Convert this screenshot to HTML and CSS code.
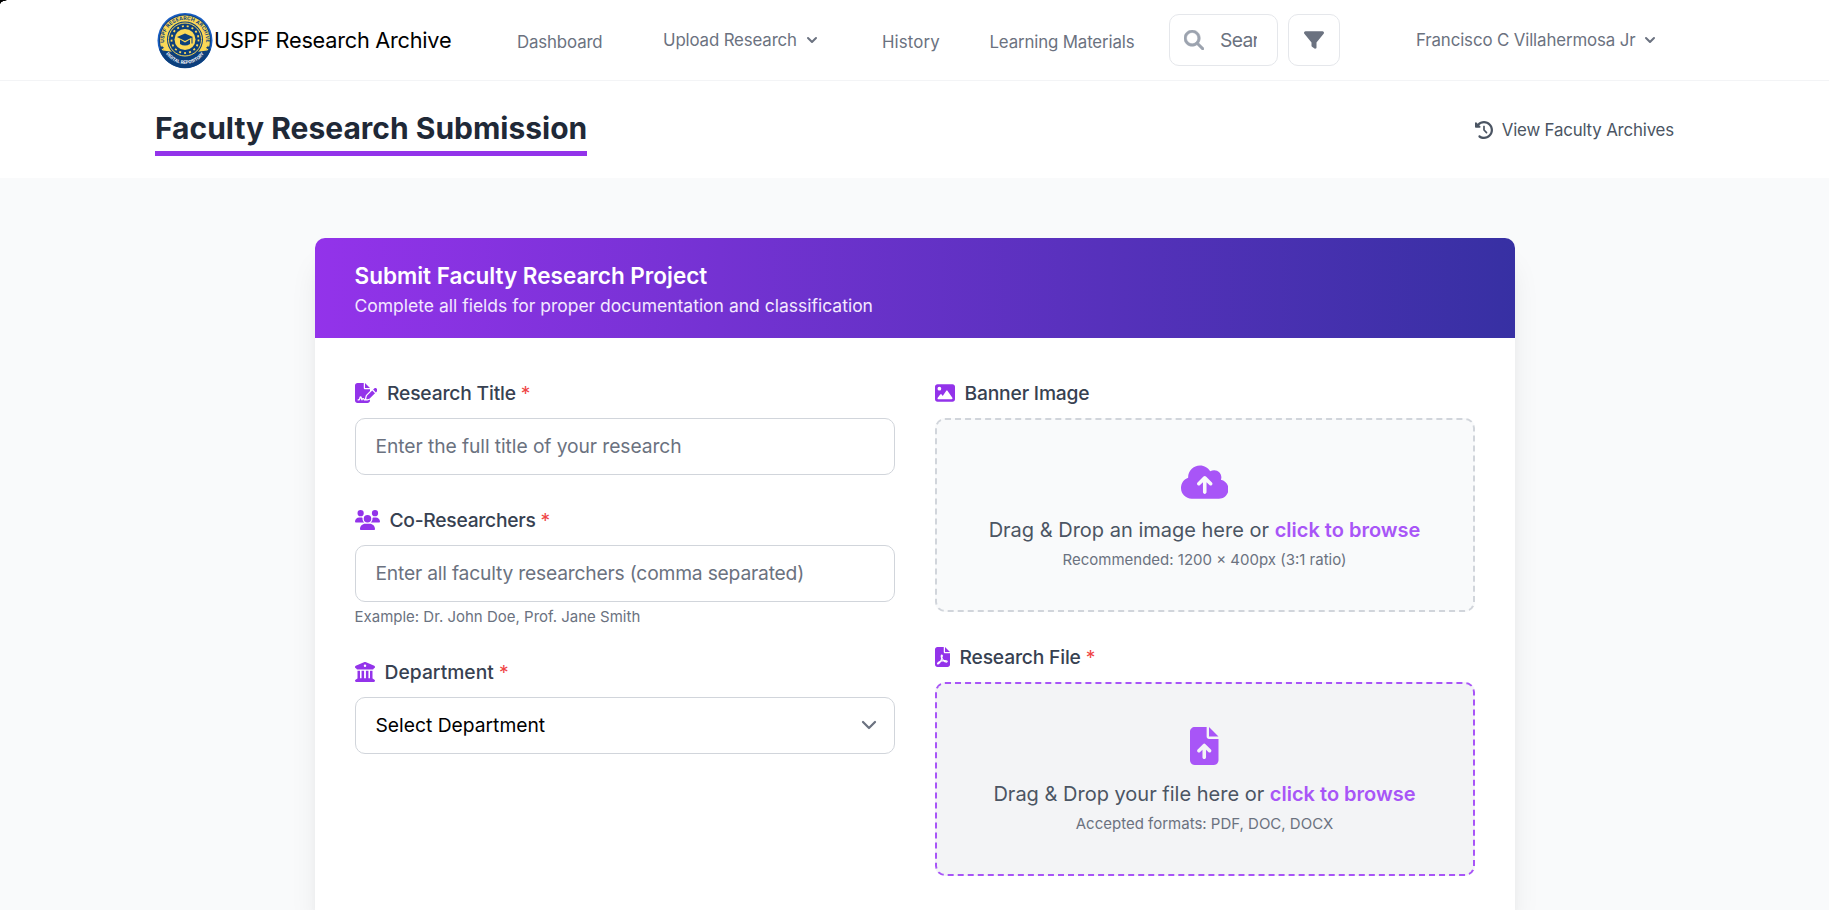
FILE: index.html
```html
<!DOCTYPE html>
<html lang="en">
<head>
<meta charset="utf-8">
<title>Faculty Research Submission</title>
<link rel="stylesheet" href="styles.css">
</head>
<body>
<div class="window-corner"></div>
<nav class="nav">
  <div class="nav-inner">
    <a class="brand">
      <svg class="logo" viewBox="0 0 112 112">
        <defs>
          <path id="arc-top" d="M15 66A42 42 0 1 1 97 66"/>
          <path id="arc-bottom" d="M13 73A46 46 0 0 0 99 73"/>
        </defs>
        <circle cx="56" cy="56" r="55" fill="#1a5fc4"/>
        <circle cx="56" cy="56" r="52" fill="#0c3f7c"/>
        <circle cx="56" cy="56" r="50" fill="#fbd856"/>
        <path d="M4 72Q13 75 16 81Q56 103 96 81Q99 75 108 72A54 54 0 0 1 4 72z" fill="#0c3f7c"/>
        <path d="M12 76Q56 84 100 76L94 92Q56 116 18 92z" fill="#0c3f7c"/>
        <circle cx="56" cy="54" r="36" fill="#0c3f7c"/>
        <circle cx="56" cy="54" r="33" fill="none" stroke="#fbd856" stroke-width="2"/>
        <circle cx="56" cy="54" r="27" fill="none" stroke="#fbd856" stroke-width="3.500" stroke-dasharray="4 6"/>
        <circle cx="56" cy="54" r="21" fill="#fbd856"/>
        <path d="M56 42L72 49 56 57 40 49zM46 54L56 60 66 54V63Q56 69 46 63zM69 50h2v12h-2z" fill="#0c3f7c"/>
        <path d="M10 66l1.500 3h3l-2.500 2 1 3-3-2-3 2 1-3-2.500-2h3zM102 66l1.500 3h3l-2.500 2 1 3-3-2-3 2 1-3-2.500-2h3z" fill="#0c3f7c"/>
        <text class="seal-top"><textPath href="#arc-top" startOffset="50%">USPF RESEARCH ARCHIVE</textPath></text>
        <text class="seal-bottom"><textPath href="#arc-bottom" startOffset="50%">DIGITAL REPOSITORY</textPath></text>
      </svg>
      <span class="brand-name">USPF Research Archive</span>
    </a>
    <a class="nav-link low">Dashboard</a>
    <a class="nav-link">Upload Research<svg class="chev" viewBox="0 0 20 20"><path d="M5.293 7.293a1 1 0 011.414 0L10 10.586l3.293-3.293a1 1 0 111.414 1.414l-4 4a1 1 0 01-1.414 0l-4-4a1 1 0 010-1.414z"/></svg></a>
    <a class="nav-link low history">History</a>
    <a class="nav-link low">Learning Materials</a>
    <div class="search">
      <svg class="search-icon" viewBox="0 0 512 512"><path d="M416 208c0 45.900-14.900 88.300-40 122.700L502.600 457.400c12.500 12.500 12.500 32.800 0 45.300s-32.800 12.500-45.300 0L330.700 376c-34.400 25.200-76.800 40-122.700 40C93.100 416 0 322.900 0 208S93.100 0 208 0S416 93.100 416 208zM208 352a144 144 0 1 0 0-288 144 144 0 1 0 0 288z"/></svg>
      <span class="search-text">Search...</span>
    </div>
    <div class="filter"><svg viewBox="0 0 512 512"><path d="M3.900 54.900C10.500 40.900 24.500 32 40 32H472c15.500 0 29.500 8.900 36.100 22.900s4.600 30.500-5.200 42.500L320 320.900V448c0 12.100-6.800 23.200-17.700 28.600s-23.800 4.300-33.500-3l-64-48c-8.100-6-12.800-15.500-12.800-25.600V320.900L9 97.300C-.7 85.400-2.800 68.800 3.900 54.900z"/></svg></div>
    <a class="nav-link user">Francisco C Villahermosa Jr<svg class="chev" viewBox="0 0 20 20"><path d="M5.293 7.293a1 1 0 011.414 0L10 10.586l3.293-3.293a1 1 0 111.414 1.414l-4 4a1 1 0 01-1.414 0l-4-4a1 1 0 010-1.414z"/></svg></a>
  </div>
</nav>

<header class="page-head">
  <div class="page-head-inner">
    <h1>Faculty Research Submission</h1>
    <a class="archives"><svg viewBox="0 0 512 512"><path d="M75 75L41 41C25.900 25.900 0 36.600 0 57.900V168c0 13.300 10.700 24 24 24H134.100c21.400 0 32.100-25.900 17-41l-30.800-30.800C155 85.500 203 64 256 64c106 0 192 86 192 192s-86 192-192 192c-40.800 0-78.600-12.700-109.700-34.400c-14.500-10.100-34.400-6.600-44.600 7.900s-6.600 34.400 7.900 44.600C151.200 495 201.700 512 256 512c141.400 0 256-114.600 256-256S397.400 0 256 0C185.300 0 121.300 28.700 75 75zm181 53c-13.300 0-24 10.700-24 24V256c0 6.400 2.500 12.500 7 17l72 72c9.400 9.400 24.600 9.400 33.900 0s9.400-24.600 0-33.900l-65-65V152c0-13.300-10.700-24-24-24z"/></svg><span>View Faculty Archives</span></a>
  </div>
</header>

<main class="card">
  <div class="card-head">
    <h2>Submit Faculty Research Project</h2>
    <p>Complete all fields for proper documentation and classification</p>
  </div>
  <div class="card-body">
    <div class="column">
      <div class="field">
        <div class="label">
          <svg class="w-sig" viewBox="0 0 576 512"><path d="M64 0C28.700 0 0 28.700 0 64V448c0 35.300 28.700 64 64 64H320c35.300 0 64-28.700 64-64V428.700c-2.700 1.100-5.400 2-8.200 2.700l-60.100 15c-3 .7-6 1.200-9 1.400c-.9 .1-1.800 .2-2.700 .2H240c-6.100 0-11.600-3.400-14.300-8.800l-8.800-17.700c-1.700-3.400-5.100-5.500-8.800-5.500s-7.200 2.100-8.800 5.500l-8.800 17.700c-2.900 5.900-9.200 9.400-15.700 8.800s-12.100-5.100-13.900-11.300L144 381l-9.800 32.800c-6.100 20.300-24.800 34.200-46 34.200H80c-8.800 0-16-7.200-16-16s7.200-16 16-16h8.200c7.100 0 13.300-4.600 15.300-11.400l14.900-49.500c3.400-11.300 13.800-19.100 25.600-19.100s22.200 7.700 25.600 19.100l11.600 38.600c7.400-6.200 16.800-9.700 26.800-9.700c15.900 0 30.400 9 37.500 23.200l4.400 8.800h8.900c-3.100-8.800-3.700-18.400-1.400-27.800l15-60.100c2.800-11.300 8.600-21.500 16.800-29.700L384 203.600V160H256c-17.700 0-32-14.300-32-32V0H64zM256 0V128H384L256 0zM549.800 139.700c-15.600-15.600-40.900-15.600-56.600 0l-29.400 29.400 71 71 29.400-29.400c15.600-15.600 15.600-40.900 0-56.600l-14.400-14.400zM311.900 321c-4.100 4.100-7 9.200-8.400 14.900l-15 60.100c-1.400 5.500 .2 11.200 4.200 15.200s9.700 5.600 15.200 4.200l60.100-15c5.600-1.400 10.800-4.300 14.900-8.400L512.100 262.700l-71-71L311.900 321z"/></svg>
          <span>Research Title</span><span class="req">*</span>
        </div>
        <div class="input"><span class="ph">Enter the full title of your research</span></div>
      </div>
      <div class="field">
        <div class="label">
          <svg class="w-users" viewBox="0 0 640 512"><path d="M144 0a80 80 0 1 1 0 160A80 80 0 1 1 144 0zM512 0a80 80 0 1 1 0 160A80 80 0 1 1 512 0zM0 298.700C0 239.800 47.800 192 106.700 192h42.700c15.900 0 31 3.500 44.600 9.700c-1.300 7.200-1.900 14.700-1.900 22.300c0 38.200 16.800 72.500 43.300 96c-.2 0-.4 0-.7 0H21.300C9.600 320 0 310.400 0 298.700zM405.300 320c-.2 0-.4 0-.7 0c26.600-23.500 43.300-57.800 43.300-96c0-7.600-.7-15-1.900-22.300c13.600-6.300 28.700-9.700 44.600-9.700h42.700C592.200 192 640 239.800 640 298.700c0 11.800-9.600 21.300-21.300 21.300H405.300zM224 224a96 96 0 1 1 192 0 96 96 0 1 1 -192 0zM128 485.300C128 411.700 187.700 352 261.300 352H378.700C452.300 352 512 411.700 512 485.300c0 14.700-11.900 26.700-26.700 26.700H154.700c-14.700 0-26.700-11.900-26.700-26.700z"/></svg>
          <span class="tight">Co-Researchers</span><span class="req">*</span>
        </div>
        <div class="input"><span class="ph ph-long">Enter all faculty researchers (comma separated)</span></div>
        <p class="help">Example: Dr. John Doe, Prof. Jane Smith</p>
      </div>
      <div class="field">
        <div class="label">
          <svg class="w-square" viewBox="0 0 512 512"><path d="M243.400 2.600l-224 96c-14 6-21.800 21-18.700 35.800S16.800 160 32 160v8c0 13.300 10.700 24 24 24H456c13.300 0 24-10.700 24-24v-8c15.200 0 28.300-10.700 31.300-25.600s-4.800-29.900-18.700-35.800l-224-96c-8-3.400-17.200-3.400-25.200 0zM128 224H64V420.300c-.6 .3-1.200 .7-1.800 1.100l-48 32c-11.700 7.800-17 22.400-12.900 35.900S17.900 512 32 512H480c14.100 0 26.500-9.200 30.600-22.700s-1.100-28.100-12.900-35.900l-48-32c-.6-.4-1.200-.7-1.800-1.100V224H384V416H344V224H280V416H232V224H168V416H128V224zM256 64a32 32 0 1 1 0 64 32 32 0 1 1 0-64z"/></svg>
          <span class="wide">Department</span><span class="req">*</span>
        </div>
        <div class="input select"><span>Select Department</span><svg viewBox="0 0 20 20"><path d="M6 8l4 4 4-4"/></svg></div>
      </div>
    </div>
    <div class="column">
      <div class="field">
        <div class="label">
          <svg class="w-square" viewBox="0 0 512 512"><path d="M0 96C0 60.700 28.700 32 64 32H448c35.300 0 64 28.700 64 64V416c0 35.300-28.700 64-64 64H64c-35.300 0-64-28.700-64-64V96zM323.800 202.500c-4.500-6.600-11.900-10.500-19.800-10.500s-15.400 3.900-19.800 10.500l-87 127.600L170.700 297c-4.600-5.700-11.500-9-18.700-9s-14.200 3.300-18.700 9l-64 80c-5.800 7.200-6.900 17.100-2.900 25.400s12.400 13.600 21.600 13.600h96 32H424c8.900 0 17.100-4.900 21.200-12.800s3.600-17.400-1.400-24.700l-120-176zM112 192a48 48 0 1 0 0-96 48 48 0 1 0 0 96z"/></svg>
          <span>Banner Image</span>
        </div>
        <div class="drop">
          <svg class="cloud" viewBox="0 0 640 512"><path d="M144 480C64.500 480 0 415.500 0 336c0-62.800 40.200-116.200 96.200-135.900c-.1-2.700-.2-5.400-.2-8.100c0-88.400 71.600-160 160-160c59.300 0 111 32.200 138.700 80.200C409.900 102 428.300 96 448 96c53 0 96 43 96 96c0 12.200-2.300 23.800-6.400 34.600C596 238.400 640 290.100 640 352c0 70.700-57.300 128-128 128H144zm79-217c-9.400 9.400-9.400 24.600 0 33.900s24.600 9.400 33.900 0l39-39V392c0 13.300 10.700 24 24 24s24-10.700 24-24V257.900l39 39c9.400 9.400 24.600 9.400 33.900 0s9.400-24.600 0-33.900l-80-80c-9.400-9.400-24.600-9.400-33.900 0l-80 80z"/></svg>
          <p class="drop-text">Drag &amp; Drop an image here or <b>click to browse</b></p>
          <p class="drop-hint">Recommended: 1200 × 400px (3:1 ratio)</p>
        </div>
      </div>
      <div class="field">
        <div class="label">
          <svg class="w-file" viewBox="0 0 384 512"><path d="M64 0C28.700 0 0 28.700 0 64V448c0 35.300 28.700 64 64 64H320c35.300 0 64-28.700 64-64V160H256c-17.700 0-32-14.300-32-32V0H64zM256 0V128H384L256 0z"/><path class="acrobat" d="M176 210c-22 0-22 34-2 82c-12 40-34 84-56 112c-26 38-60 36-52 14c10-30 90-64 154-68c56-6 96 4 94 22c-4 26-56 14-86-20c-28-26-42-52-54-80c16-34 20-62 2-62z"/></svg>
          <span>Research File</span><span class="req">*</span>
        </div>
        <div class="drop active">
          <svg class="file" viewBox="0 0 384 512"><path d="M64 0C28.700 0 0 28.700 0 64V448c0 35.300 28.700 64 64 64H320c35.300 0 64-28.700 64-64V160H256c-17.700 0-32-14.300-32-32V0H64zM256 0V128H384L256 0zM216 408c0 13.300-10.700 24-24 24s-24-10.700-24-24V305.900l-31 31c-9.400 9.400-24.600 9.400-33.900 0s-9.400-24.600 0-33.900l72-72c9.400-9.400 24.600-9.400 33.900 0l72 72c9.400 9.400 9.400 24.600 0 33.900s-24.600 9.400-33.900 0l-31-31V408z"/></svg>
          <p class="drop-text">Drag &amp; Drop your file here or <b>click to browse</b></p>
          <p class="drop-hint">Accepted formats: PDF, DOC, DOCX</p>
        </div>
      </div>
    </div>
  </div>
</main>
</body>
</html>
```
FILE: styles.css
```css
* { box-sizing: border-box; margin: 0; padding: 0; }
html { overflow: hidden; }
body {
  height: 910px;
  overflow: hidden;
  display: flex;
  flex-direction: column;
  background: #f9fafb;
  font-family: Inter, "Liberation Sans", sans-serif;
}
svg { display: block; flex: none; fill: currentColor; }
.window-corner {
  position: absolute;
  top: 0;
  left: 0;
  width: 10px;
  height: 4px;
  background: radial-gradient(ellipse 10px 4px at 100% 100%, transparent 92%, #000 100%);
}

/* Navigation */
.nav { flex: none; height: 81px; background: #fff; border-bottom: 1px solid #f3f4f6; }
.nav-inner {
  width: 1519px;
  height: 80px;
  margin: 0 auto;
  display: grid;
  grid-template-columns: 362px 146px 219px 107.500px 179.500px 109px 10px 52px 76px 1fr;
  align-items: center;
}
.brand { display: flex; align-items: center; padding-left: 2px; }
.logo { width: 56px; height: 57px; }
.seal-top, .seal-bottom { font-family: Roboto, sans-serif; font-weight: 700; text-anchor: middle; }
.seal-top { font-size: 10.500px; fill: #0c3f7c; letter-spacing: 0.500px; }
.seal-bottom { font-size: 9px; fill: #fff; }
.brand-name { margin-left: 1px; font-size: 21.700px; letter-spacing: -0.240px; color: #000; white-space: nowrap; }
.nav-link {
  display: flex;
  align-items: center;
  font-size: 16.850px;
  letter-spacing: -0.150px;
  line-height: 25px;
  color: #6b7280;
  white-space: nowrap;
}
.low { padding-top: 4px; }
.history { letter-spacing: 0.100px; }
.chev { width: 20px; height: 20px; margin-left: 5px; }
.search, .filter {
  height: 52px;
  border: 1px solid #e5e7eb;
  border-radius: 10px;
  background: #fff;
  display: flex;
  align-items: center;
}
.search { padding: 0 20px 0 14px; }
.search-icon { width: 20px; height: 20px; color: #9ca3af; stroke: #9ca3af; stroke-width: 14px; }
.search-text {
  min-width: 0;
  margin-left: 16px;
  overflow: hidden;
  white-space: nowrap;
  font-size: 19.250px;
  letter-spacing: -0.650px;
  line-height: 28px;
  color: #6b7280;
}
.filter { grid-column: 8; justify-content: center; color: #6b7280; }
.filter svg { width: 20px; height: 20px; }
.user { grid-column: 10; letter-spacing: -0.130px; }

/* Page heading */
.page-head { flex: none; height: 97px; background: #fff; }
.page-head-inner {
  width: 1519px;
  margin: 0 auto;
  padding-top: 29px;
  display: flex;
  justify-content: space-between;
  align-items: flex-start;
}
h1 {
  font-size: 30px;
  line-height: 36px;
  font-weight: 700;
  color: #1f2937;
  padding-bottom: 5px;
  border-bottom: 5px solid #9333ea;
}
.archives {
  display: flex;
  align-items: center;
  gap: 9px;
  padding-top: 6px;
  font-size: 16.850px;
  line-height: 25px;
  letter-spacing: -0.170px;
  color: #4b5563;
}
.archives svg { width: 18px; height: 18px; }
.archives span { padding-top: 2px; }

/* Form card */
.card {
  flex: 1;
  width: 1200px;
  margin: 60px auto 0;
  background: #fff;
  border-radius: 10px 10px 0 0;
  box-shadow: 0 25px 31px -6px rgba(0, 0, 0, 0.1), 0 10px 12px -7px rgba(0, 0, 0, 0.1);
}
.card-head {
  height: 100px;
  padding: 20px 40px;
  border-radius: 10px 10px 0 0;
  background: linear-gradient(to right, #9333ea, #3730a3);
}
h2 { font-size: 22.500px; line-height: 35px; font-weight: 600; color: #fff; }
.card-head p { font-size: 17.500px; line-height: 25px; color: #f3e8ff; }
.card-body { display: grid; grid-template-columns: 540px 540px; gap: 40px; padding: 40px 40px 0; }
.column { display: flex; flex-direction: column; gap: 30px; }
.label {
  height: 30px;
  margin-bottom: 10px;
  display: flex;
  align-items: center;
  font-size: 19.250px;
  font-weight: 500;
  letter-spacing: -0.180px;
  color: #374151;
}
.label svg { height: 20px; margin-right: 10px; color: #9333ea; }
.tight { letter-spacing: -0.270px; }
.wide { letter-spacing: 0.030px; }
.w-sig { width: 22.500px; }
.w-users { width: 25px; }
.w-square { width: 20px; }
.w-file { width: 15px; }
.label .acrobat { fill: none; stroke: #fff; stroke-width: 30px; }
.req { margin-left: 5px; color: #ef4444; font-weight: 400; }
.input {
  height: 57px;
  padding: 0 20px 2px;
  border: 1px solid #d1d5db;
  border-radius: 10px;
  background: #fff;
  display: flex;
  align-items: center;
  justify-content: space-between;
  font-size: 19.250px;
  color: #000;
}
.ph { color: #6b7280; letter-spacing: -0.080px; }
.ph-long { letter-spacing: -0.200px; }
.select svg {
  width: 30px;
  height: 30px;
  margin-right: -10px;
  fill: none;
  stroke: #6b7280;
  stroke-width: 1.500;
  stroke-linecap: round;
  stroke-linejoin: round;
}
.help { margin-top: 5px; font-size: 15px; line-height: 20px; color: #6b7280; }
.drop {
  height: 194px;
  padding-top: 42.700px;
  border: 2px dashed #d1d5db;
  border-radius: 10px;
  background: #f9fafb;
  display: flex;
  flex-direction: column;
  align-items: center;
}
.drop svg { height: 38px; color: #a855f7; }
.cloud { width: 47.500px; }
.file { width: 28.500px; }
.active { border-color: #a855f7; background: #f3f4f6; }
.drop-text { margin-top: 14.500px; font-size: 20px; line-height: 30px; color: #4b5563; }
.drop-text b { font-weight: 600; color: #a855f7; }
.drop-hint { margin-top: 5px; font-size: 15px; line-height: 20px; color: #6b7280; }
```
